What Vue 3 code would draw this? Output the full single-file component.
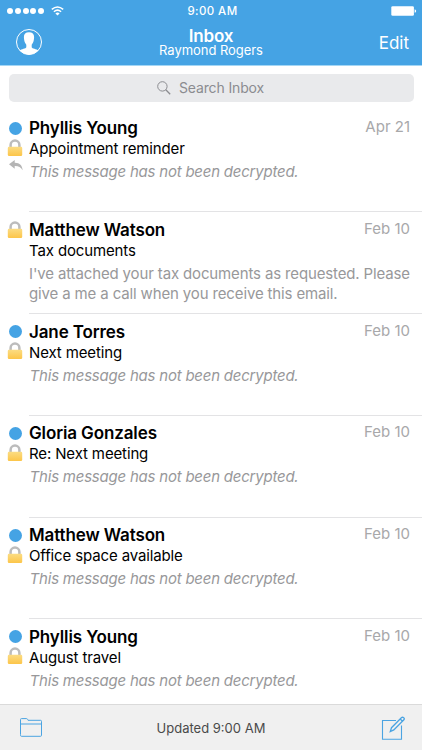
<script setup>
const messages = [
  { name: 'Phyllis Young', subject: 'Appointment reminder', date: 'Apr 21', unread: true, replied: true },
  { name: 'Matthew Watson', subject: 'Tax documents', date: 'Feb 10', lines: ["I've attached your tax documents as requested. Please", 'give a me a call when you receive this email.'] },
  { name: 'Jane Torres', subject: 'Next meeting', date: 'Feb 10', unread: true },
  { name: 'Gloria Gonzales', subject: 'Re: Next meeting', date: 'Feb 10', unread: true },
  { name: 'Matthew Watson', subject: 'Office space available', date: 'Feb 10', unread: true },
  { name: 'Phyllis Young', subject: 'August travel', date: 'Feb 10', unread: true },
]
</script>

<template>
  <div class="screen">
    <header class="header">
      <div class="status">
        <div class="signal">
          <i v-for="n in 5" :key="n" class="bar-dot"></i>
          <svg class="wifi" width="13" height="10" viewBox="0 0 13 10">
            <path d="M.8 3.4Q6.5-1.5 12.2 3.4M2.9 5.7Q6.5 2.6 10.1 5.7" fill="none" stroke="#fff" stroke-width="1.5" />
            <path d="M4.4 7.4Q6.5 5.8 8.6 7.4L6.5 9.6Z" fill="#fff" />
          </svg>
        </div>
        <span class="clock">9:00 AM</span>
        <svg class="battery" width="26" height="10" viewBox="0 0 26 10">
          <rect x=".3" y=".2" width="22.6" height="9.6" rx="1.4" fill="#fff" />
          <path d="M23.6 3.2Q25.2 3.6 25.2 5T23.6 6.8Z" fill="#fff" />
        </svg>
      </div>
      <div class="nav">
        <svg class="avatar" width="28" height="28" viewBox="0 0 28 28">
          <circle cx="14" cy="14" r="12.5" fill="none" stroke="#fff" stroke-width="1" />
          <path d="M14 4.3C10.5 4.3 8.8 6.3 8.9 9.3C8.9 10.4 9.1 11.2 9.2 12C9.5 14.1 10.5 15.6 11.3 16.8V19.2C10.9 20.8 6.5 20.9 4.500 22.3A12.5 12.5 0 0 0 23.5 22.3C21.5 20.9 17.1 20.8 16.7 19.2V16.8C17.5 15.6 18.5 14.1 18.8 12C18.9 11.2 19.1 10.4 19.1 9.3C19.2 6.3 17.5 4.3 14 4.3Z" fill="#fff" />
        </svg>
        <div class="titles">
          <div class="title">Inbox</div>
          <div class="account">Raymond Rogers</div>
        </div>
        <span class="edit">Edit</span>
      </div>
    </header>

    <div class="search-wrap">
      <div class="search">
        <svg width="14" height="14" viewBox="0 0 14 14" fill="none" stroke="#8b8c90">
          <circle cx="5.4" cy="5.4" r="4.7" stroke-width="1" />
          <path d="M8.8 8.8L13.2 13.2" stroke-width="1.3" />
        </svg>
        <span>Search Inbox</span>
      </div>
    </div>

    <main class="list">
      <article v-for="(m, i) in messages" :key="i" class="row">
        <div class="marks">
          <i class="unread" :class="{ on: m.unread }"></i>
          <svg class="lock" :class="{ raised: !m.unread }" width="16" height="18" viewBox="0 0 16 18">
            <defs>
              <linearGradient id="gold" x1="0" y1="0" x2="0" y2="1">
                <stop offset="0" stop-color="#fbdc83" />
                <stop offset="1" stop-color="#fcc549" />
              </linearGradient>
            </defs>
            <path d="M3.6 9V6A4.4 4.4 0 0 1 12.4 6V9" fill="none" stroke="#bcbcbc" stroke-width="2.5" />
            <rect x=".8" y="7.8" width="14.4" height="9.2" rx="1.2" fill="url(#gold)" />
          </svg>
          <svg v-if="m.replied" class="reply" width="14" height="11" viewBox="0 0 14 11">
            <path d="M0 4.3L5.7 0V2.7C10.8 2.6 13.3 5.5 13.6 10.2C11.7 7 9.5 6 5.7 6.1V8.7Z" fill="#b5b5b5" />
          </svg>
        </div>
        <div class="body">
          <div class="top">
            <span class="name">{{ m.name }}</span>
            <span class="date">{{ m.date }}</span>
          </div>
          <div class="subject">{{ m.subject }}</div>
          <div v-if="m.lines" class="preview">
            <div v-for="line in m.lines" :key="line">{{ line }}</div>
          </div>
          <div v-else class="preview locked">This message has not been decrypted.</div>
        </div>
      </article>
    </main>

    <footer class="toolbar">
      <svg class="folder" width="22" height="19" viewBox="0 0 22 19" fill="none" stroke="#4ba4e2" stroke-width="1">
        <path d="M.5 16.5V1.5Q.5.6 1.5.6H6.5Q7.3.6 7.6 1.4L8 2.3H20.5Q21.5 2.3 21.5 3.3V17.3Q21.5 18.3 20.5 18.3H1.5Q.5 18.3.5 17.3ZM.5 6H21.5" />
      </svg>
      <span class="updated">Updated 9:00 AM</span>
      <svg class="compose" width="24" height="24" viewBox="0 0 24 24" fill="none" stroke="#4ba4e2">
        <path d="M15 4.5H1.5V23.3H20.5V9.500" stroke-width="1.1" />
        <path d="M9.300 15.500L10.500 11.700L20.600 1.600Q21.600.8 22.700 1.700T22.900 3.800L12.800 13.900ZM19.200 3L21.500 5.200" stroke-width="1.300" />
      </svg>
    </footer>
  </div>
</template>

<style>
body { margin: 0; background: #fff; }
</style>

<style scoped>
.screen {
  width: 422px;
  height: 750px;
  display: flex;
  flex-direction: column;
  overflow: hidden;
  background: #fff;
  color: #000;
  font-family: Inter, "Liberation Sans", sans-serif;
  white-space: nowrap;
}
.header {
  height: 66px;
  flex: none;
  box-sizing: border-box;
  background: #45a3e4;
  border-bottom: 1px solid #a3d6f5;
  color: #fff;
}
.status {
  height: 22px;
  padding: 0 5px 0 7px;
  display: grid;
  grid-template-columns: 1fr auto 1fr;
  align-items: center;
}
.signal { display: flex; align-items: center; gap: 1.8px; }
.bar-dot { width: 6px; height: 6px; border-radius: 50%; background: #fff; }
.wifi { margin-left: 5px; }
.clock { font-size: 11.5px; font-weight: 500; letter-spacing: .4px; line-height: 22px; padding-left: 1px; }
.battery { justify-self: end; }
.nav {
  height: 43px;
  padding: 0 13px 0 15px;
  display: grid;
  grid-template-columns: 1fr auto 1fr;
}
.avatar { margin-top: 6px; }
.titles { text-align: center; padding: 6px 2px 0 0; }
.title { font-size: 17px; font-weight: 600; line-height: 16px; letter-spacing: -.2px; }
.account { font-size: 13px; line-height: 13px; letter-spacing: -.05px; }
.edit { justify-self: end; font-size: 17px; line-height: 43px; }
.search-wrap { height: 44px; flex: none; padding: 8px 8px 0 9px; box-sizing: border-box; }
.search {
  height: 28px;
  box-sizing: border-box;
  padding-right: 2px;
  border-radius: 5px;
  background: #e9eaec;
  color: #8b8c90;
  display: flex;
  align-items: center;
  justify-content: center;
  gap: 8px;
  font-size: 14px;
  letter-spacing: -.13px;
}
.search span { line-height: 27px; padding-bottom: 1px; }
.list { flex: 1; min-height: 0; overflow: hidden; }
.row { height: 101.8px; display: flex; padding-left: 7px; box-sizing: border-box; }
.marks { width: 22px; flex: none; display: flex; flex-direction: column; padding-top: 11.5px; box-sizing: border-box; }
.unread { width: 13px; height: 13px; margin-left: 1.5px; border-radius: 50%; flex: none; }
.unread.on { background: #45a3e4; }
.lock { margin-top: 4px; flex: none; }
.lock.raised { margin-top: -15px; }
.reply { margin: 3px 0 0 1.5px; }
.body { flex: 1; min-width: 0; height: 102.3px; box-sizing: border-box; border-bottom: 1px solid #e3e3e5; padding: 8px 12px 0 0; }
.row:last-child .body { border-bottom: 0; }
.top { display: flex; justify-content: space-between; height: 20px; line-height: 20px; }
.name { font-size: 17px; font-weight: 600; letter-spacing: -.12px; }
.date { font-size: 15px; color: #a8a8aa; line-height: 17px; }
.subject { font-size: 15px; line-height: 20px; height: 20px; padding-top: 1px; letter-spacing: -.13px; }
.preview { margin-top: 3px; font-size: 15px; line-height: 20.5px; color: #98989a; letter-spacing: -.14px; }
.locked { font-style: italic; letter-spacing: -.22px; padding-left: .6px; }
.toolbar {
  height: 46px;
  flex: none;
  box-sizing: border-box;
  border-top: 1px solid #dadada;
  background: #f0f0f0;
  display: grid;
  grid-template-columns: 1fr auto 1fr;
  align-items: center;
  padding: 0 17px 0 20px;
}
.updated { font-size: 13px; color: #4a4a4a; padding-right: 3px; }
.compose { justify-self: end; }
</style>
